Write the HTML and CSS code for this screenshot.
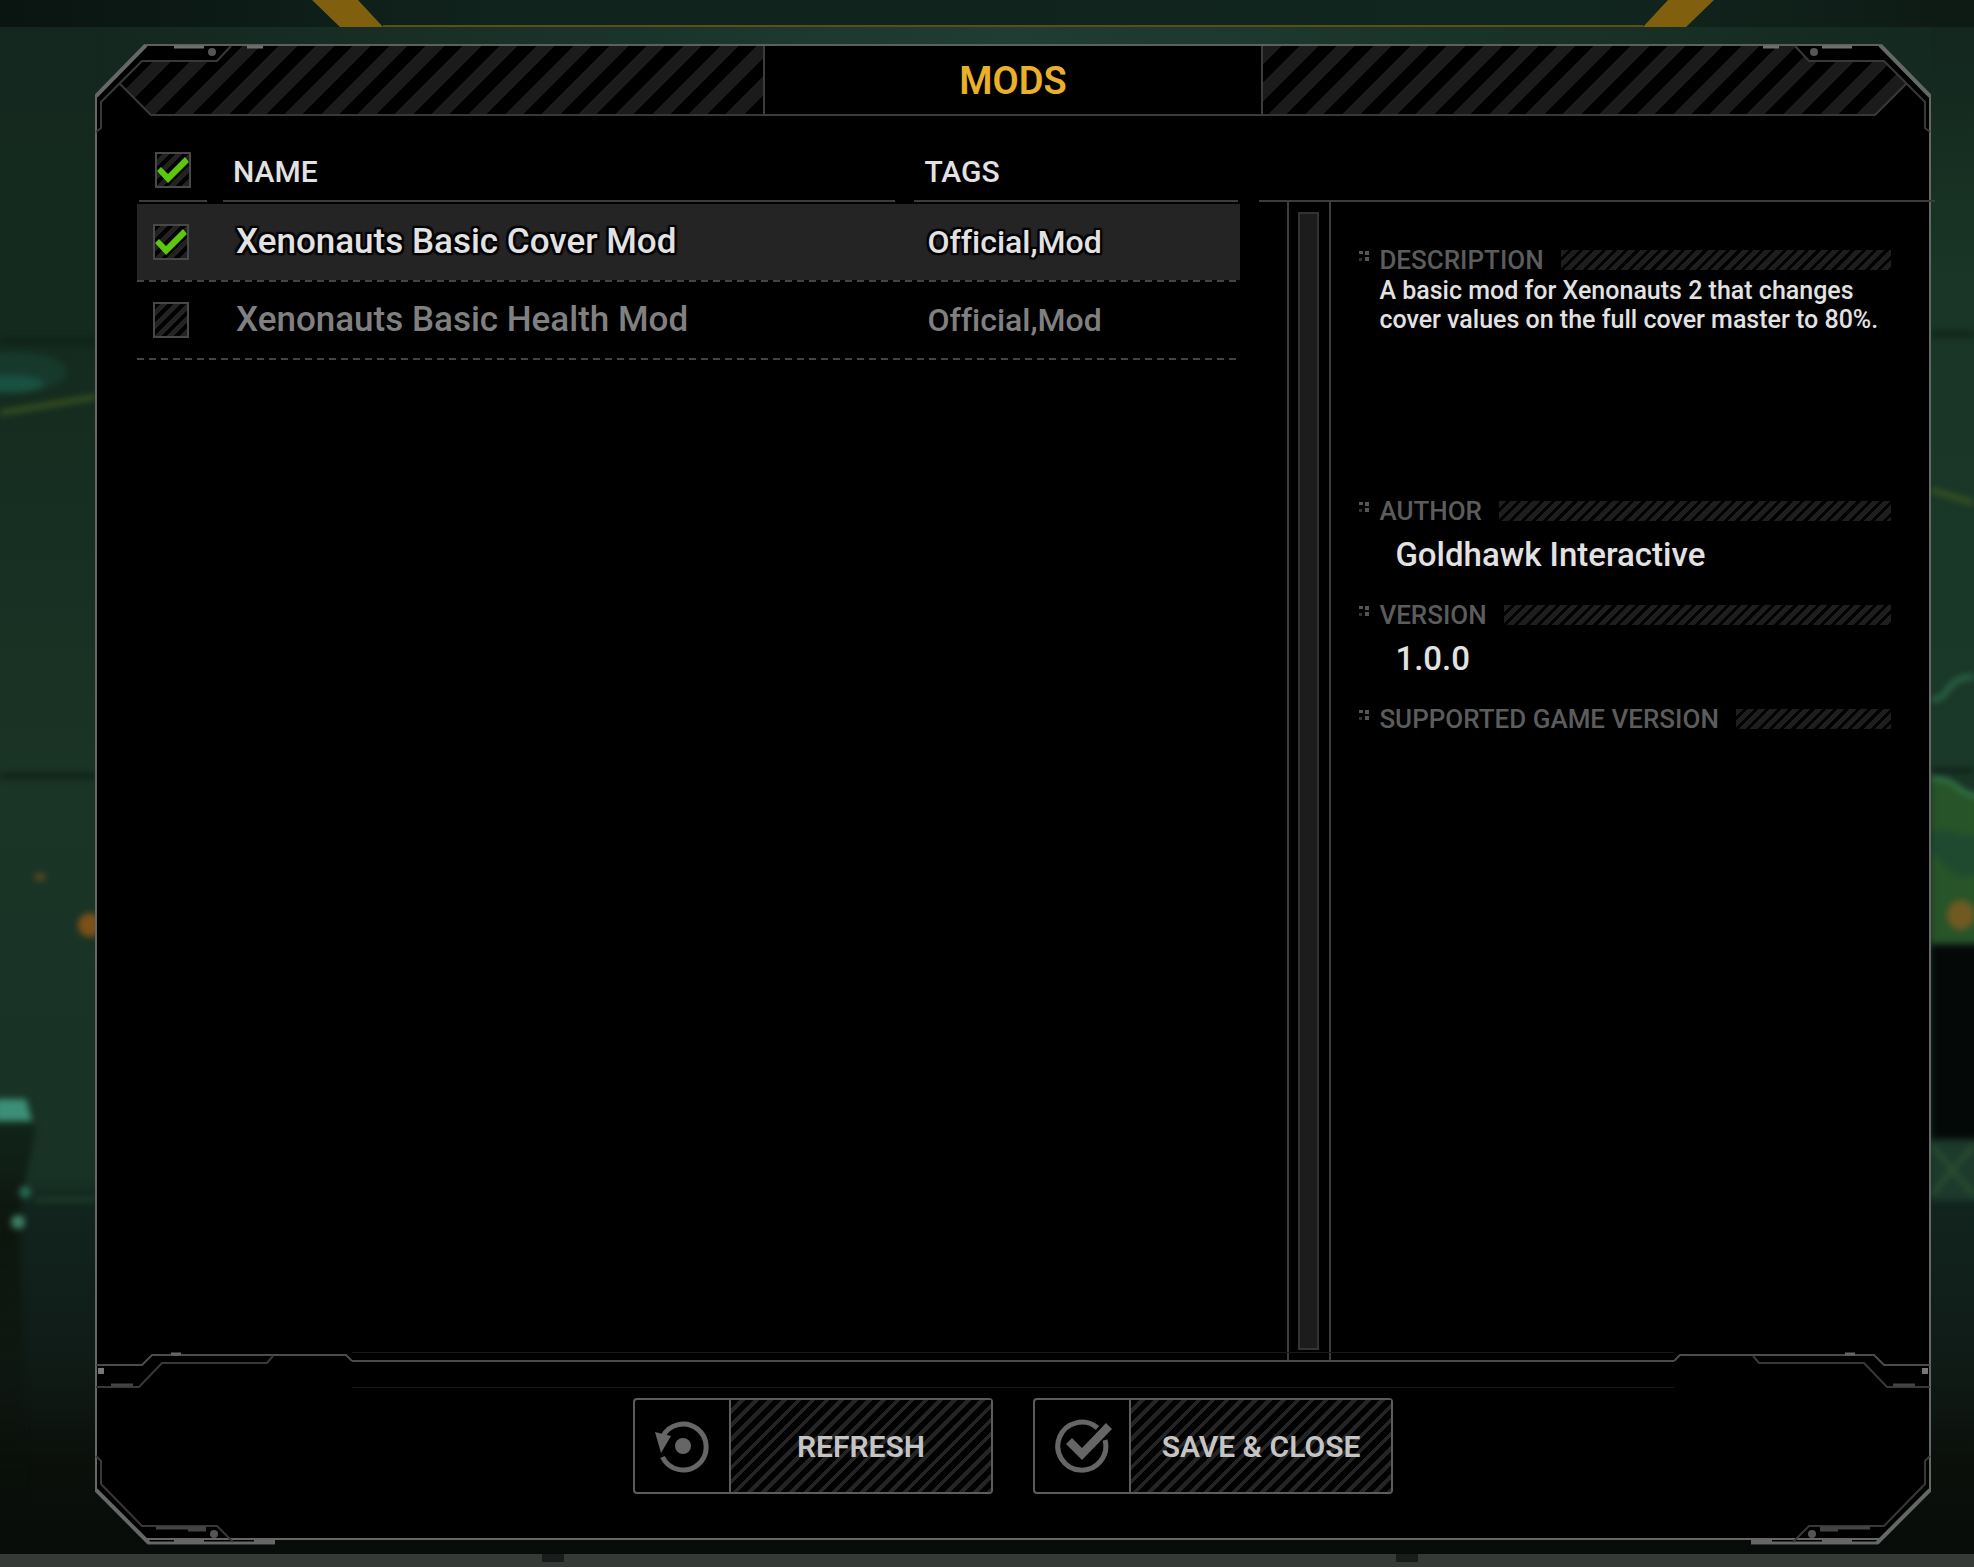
FILE: index.html
```html
<!DOCTYPE html>
<html lang="en">
<head>
<meta charset="utf-8">
<title>Mods</title>
<link rel="stylesheet" href="styles.css">
</head>
<body>
<svg class="scene" viewBox="0 0 1974 1567" preserveAspectRatio="none" aria-hidden="true">
  <defs>
    <linearGradient id="room" x1="0" y1="0" x2="0" y2="1">
      <stop offset="0" stop-color="#14271f"/>
      <stop offset=".2" stop-color="#142a1e"/>
      <stop offset=".5" stop-color="#1a3426"/>
      <stop offset=".75" stop-color="#183326"/>
      <stop offset=".77" stop-color="#12241e"/>
      <stop offset=".88" stop-color="#0f1a15"/>
      <stop offset=".93" stop-color="#0b100b"/>
      <stop offset="1" stop-color="#070b09"/>
    </linearGradient>
    <linearGradient id="glow" x1="0" y1="0" x2="1" y2="0">
      <stop offset="0" stop-color="#14271f"/>
      <stop offset=".5" stop-color="#203d33"/>
      <stop offset="1" stop-color="#14291f"/>
    </linearGradient>
    <linearGradient id="strip" x1="0" y1="0" x2="1" y2="0">
      <stop offset="0" stop-color="#0a1410"/>
      <stop offset=".25" stop-color="#10231c"/>
      <stop offset=".8" stop-color="#11261f"/>
      <stop offset="1" stop-color="#0e1a14"/>
    </linearGradient>
    <linearGradient id="chair" x1="0" y1="0" x2="0" y2="1">
      <stop offset="0" stop-color="#0b140e" stop-opacity=".5"/>
      <stop offset=".3" stop-color="#0d150c" stop-opacity=".9"/>
      <stop offset="1" stop-color="#0a0f0a" stop-opacity="0"/>
    </linearGradient>
    <linearGradient id="wall" x1="0" y1="0" x2="0" y2="1">
      <stop offset="0" stop-color="#1b3b29" stop-opacity="0"/>
      <stop offset=".3" stop-color="#1b3b29" stop-opacity=".7"/>
      <stop offset="1" stop-color="#1b3b29" stop-opacity=".7"/>
    </linearGradient>
    <filter id="soft" x="-20%" y="-20%" width="140%" height="140%" color-interpolation-filters="sRGB"><feGaussianBlur stdDeviation="3"/></filter>
  </defs>
  <rect width="1974" height="1567" fill="url(#room)"/>
  <rect x="96" y="27" width="1835" height="60" fill="url(#glow)"/>
  <rect x="1931" y="60" width="43" height="717" fill="url(#wall)"/>
  <g filter="url(#soft)">
    <path d="M0 341H96M1931 334H1974M0 776H96M1931 771H1974" stroke="#0e1f17" stroke-width="5"/>
    <ellipse cx="15" cy="372" rx="52" ry="20" fill="#18483a" opacity=".5"/>
    <ellipse cx="10" cy="384" rx="34" ry="9" fill="#1a6250" opacity=".6"/>
    <path d="M0 413L96 397" stroke="#3b5420" stroke-width="5" fill="none"/>
    <path d="M1931 490L1974 503" stroke="#3d5422" stroke-width="5" fill="none"/>
    <path d="M1931 699C1950 702 1944 676 1974 677" stroke="#2b6a48" stroke-width="5" fill="none"/>
    <ellipse cx="40" cy="877" rx="6" ry="4" fill="#5a4a1c"/>
    <circle cx="90" cy="925" r="12" fill="#7c5018"/>
    <path d="M1931 778C1960 778 1954 794 1980 796V943H1931Z" fill="#275428"/>
    <path d="M1931 834C1945 822 1960 842 1980 834V872C1960 885 1945 868 1931 850Z" fill="#1f4a30"/>
    <path d="M1931 778C1960 778 1954 794 1980 796" stroke="#348150" stroke-width="4" fill="none"/>
    <ellipse cx="1961" cy="915" rx="14" ry="15" fill="#705a22"/>
    <rect x="1931" y="945" width="50" height="194" fill="#040907"/>
    <rect x="1931" y="1142" width="50" height="58" fill="#1d3a2c"/>
    <path d="M1931 1145L1974 1195M1974 1145L1931 1195" stroke="#2b5230" stroke-width="4"/>
    <path d="M-5 1124H36C32 1160 18 1190 20 1250L26 1500H-5Z" fill="url(#chair)"/>
    <path d="M-5 1099H26L32 1121H-5Z" fill="#3c8f76"/>
    <circle cx="25" cy="1192" r="6" fill="#286b53"/>
    <circle cx="18" cy="1222" r="7" fill="#3f8065"/>
    <path d="M36 1200H96" stroke="#1f4a2e" stroke-width="3"/>
  </g>
  <rect y="1554" width="1974" height="13" fill="#353a37"/>
  <path d="M542 1554h22v8h-22zM1396 1554h22v8h-22z" fill="#181c1a"/>
  <rect width="1974" height="27" fill="url(#strip)"/>
  <path d="M383 26H1643" stroke="#5f4d16" stroke-width="2"/>
  <path d="M312 0H358L383 27H340ZM1668 0H1714L1686 27H1643Z" fill="#80600f"/>
</svg>

<main class="panel">
  <svg class="corner corner-tl" width="180" height="90" aria-hidden="true"><use href="#top-corner"/></svg>
  <svg class="corner corner-tr" width="180" height="90" aria-hidden="true"><use href="#top-corner"/></svg>
  <svg class="corner corner-bl" width="180" height="92" aria-hidden="true"><use href="#bottom-corner"/></svg>
  <svg class="corner corner-br" width="180" height="92" aria-hidden="true"><use href="#bottom-corner"/></svg>

  <header class="titlebar">
    <div class="hazard hazard-left"></div>
    <h1 class="title">MODS</h1>
    <div class="hazard hazard-right"></div>
  </header>

  <div class="content">
    <section class="list">
      <table class="mods">
        <colgroup><col class="col-check"><col class="col-name"><col class="col-tags"></colgroup>
        <thead>
          <tr>
            <th scope="col"><div class="head head-check"><input class="check" type="checkbox" checked aria-label="Enable all mods"></div></th>
            <th scope="col"><div class="head head-name">NAME</div></th>
            <th scope="col"><div class="head head-tags">TAGS</div></th>
          </tr>
        </thead>
        <tbody>
          <tr class="mod selected">
            <td><input class="check" type="checkbox" id="mod-cover" checked></td>
            <td><label for="mod-cover">Xenonauts Basic Cover Mod</label></td>
            <td class="tags">Official,Mod</td>
          </tr>
          <tr class="mod">
            <td><input class="check" type="checkbox" id="mod-health"></td>
            <td><label for="mod-health">Xenonauts Basic Health Mod</label></td>
            <td class="tags">Official,Mod</td>
          </tr>
        </tbody>
      </table>
    </section>

    <div class="side">
      <div class="scroll"><div class="track"></div></div>
      <section class="details">
        <div class="field field-description">
          <h2 class="label"><svg class="pips" width="12" height="12" aria-hidden="true"><use href="#pips"/></svg>DESCRIPTION</h2>
          <p class="text">A basic mod for Xenonauts 2 that changes cover values on the full cover master to 80%.</p>
        </div>
        <div class="field">
          <h2 class="label"><svg class="pips" width="12" height="12" aria-hidden="true"><use href="#pips"/></svg>AUTHOR</h2>
          <p class="value">Goldhawk Interactive</p>
        </div>
        <div class="field">
          <h2 class="label"><svg class="pips" width="12" height="12" aria-hidden="true"><use href="#pips"/></svg>VERSION</h2>
          <p class="value">1.0.0</p>
        </div>
        <div class="field">
          <h2 class="label"><svg class="pips" width="12" height="12" aria-hidden="true"><use href="#pips"/></svg>SUPPORTED GAME VERSION</h2>
        </div>
      </section>
    </div>
  </div>

  <div class="rail" aria-hidden="true">
    <svg class="rail-end" width="256" height="36"><use href="#rail-end"/></svg>
    <div class="rail-line"></div>
    <svg class="rail-end flipped" width="256" height="36"><use href="#rail-end"/></svg>
  </div>

  <footer class="actions">
    <button class="button" type="button">
      <span class="button-icon">
        <svg width="56" height="56" viewBox="0 0 56 56" aria-hidden="true">
          <path d="M8.500 19A23 23 0 1 1 8.500 39" fill="none" stroke="#666" stroke-width="5"/>
          <circle cx="29" cy="28" r="8" fill="#666"/>
          <path d="M1 14L17 18L7 35Z" fill="#666"/>
        </svg>
      </span>
      <span class="button-label">REFRESH</span>
    </button>
    <button class="button" type="button">
      <span class="button-icon">
        <svg width="60" height="56" viewBox="0 0 60 56" aria-hidden="true">
          <path d="M45.500 10A24 24 0 1 0 53 22" fill="none" stroke="#666" stroke-width="5"/>
          <path d="M14 26L20 20L30 30L54 5L60 11L30 42Z" fill="#666"/>
        </svg>
      </span>
      <span class="button-label">SAVE &amp; CLOSE</span>
    </button>
  </footer>
</main>

<svg class="symbols" width="0" height="0" aria-hidden="true">
  <defs>
    <g id="top-corner" fill="none">
      <path d="M51 1L1 52" stroke="#646866" stroke-width="4"/>
      <path d="M136 2L122 17H47L6 58V84L1 88M25 40L56 71" stroke="#383838" stroke-width="2"/>
      <path d="M79 3H109M152 3H168" stroke="#6c706e" stroke-width="3"/>
      <circle cx="117" cy="8" r="4" fill="#555"/>
    </g>
    <g id="bottom-corner" fill="none">
      <path d="M1 37L54 90" stroke="#646866" stroke-width="4"/>
      <path d="M53 90H180" stroke="#666" stroke-width="3"/>
      <path d="M1 3L6 8V31L47 73H122L138 89" stroke="#383838" stroke-width="2"/>
      <path d="M61 75H111M93 77H111" stroke="#444" stroke-width="3"/>
      <path d="M79 88H109M159 88H180" stroke="#666" stroke-width="3"/>
      <circle cx="119" cy="81" r="4" fill="#555"/>
    </g>
    <g id="rail-end" fill="none">
      <path d="M0 13H46L56 3H250L256 9" stroke="#4c4c4c" stroke-width="2"/>
      <path d="M0 35H43L66 11H171L177 4" stroke="#383838" stroke-width="2"/>
      <path d="M15 33H37" stroke="#444" stroke-width="3"/>
      <path d="M75 2H85" stroke="#666" stroke-width="3"/>
      <path d="M2 16H8V22H2Z" fill="#777"/>
    </g>
    <g id="pips" fill="#555">
      <path d="M0 1h4v3h-4zM6 1h4v4h-4zM6 7h4v4h-4z"/>
      <path d="M0 8h3v3h-3z" fill="#333"/>
    </g>
  </defs>
</svg>
</body>
</html>
```

FILE: styles.css
```css
* { box-sizing: border-box; }

body {
  margin: 0;
  min-height: 100vh;
  padding: 44px 43px 22px 95px;
  display: flex;
  background: #0a100d;
  color: #e2e2e2;
  font-family: Roboto, "Liberation Sans", sans-serif;
  font-weight: 500;
  font-variant-ligatures: none;
}

h1, h2, p { margin: 0; }

.scene {
  position: absolute;
  inset: 0;
  width: 100%;
  height: 100%;
  z-index: -2;
}

.symbols { position: absolute; }

/* Panel frame */
.panel {
  position: relative;
  flex: 1;
  min-width: 0;
  display: flex;
  flex-direction: column;
}

.panel::before {
  content: "";
  position: absolute;
  inset: 0;
  z-index: -1;
  background:
    linear-gradient(#5c605e, #5c605e) top / 100% 2px no-repeat,
    linear-gradient(#646866, #646866) left / 2px 100% no-repeat,
    linear-gradient(#646866, #646866) right / 2px 100% no-repeat,
    linear-gradient(#666, #666) 0 calc(100% - 5px) / 100% 2px no-repeat,
    #000;
  clip-path: polygon(51px 0, calc(100% - 51px) 0, 100% 51px, 100% calc(100% - 54px),
    calc(100% - 54px) 100%, calc(100% - 180px) 100%, calc(100% - 180px) calc(100% - 5px),
    180px calc(100% - 5px), 180px 100%, 54px 100%, 0 calc(100% - 54px), 0 51px);
}

.corner { position: absolute; z-index: 1; pointer-events: none; }
.corner-tl { top: 0; left: 0; }
.corner-tr { top: 0; right: 0; transform: scaleX(-1); }
.corner-bl { bottom: 0; left: 0; }
.corner-br { bottom: 0; right: 0; transform: scaleX(-1); }
.flipped { transform: scaleX(-1); }

/* Title bar */
.titlebar {
  display: grid;
  grid-template-columns: 1fr 500px 1fr;
  height: 72px;
  padding-top: 2px;
}

.title {
  display: flex;
  align-items: center;
  justify-content: center;
  padding-top: 2px;
  border: 2px solid #3c3c3c;
  border-top: 0;
  color: #e9b02b;
  font-size: 38px;
  font-weight: 600;
  line-height: 40px;
}

.hazard {
  border-bottom: 2px solid #383838;
  background: repeating-linear-gradient(135deg, #1b1b1b 0 13px, #000 13px 26px);
}

.hazard-left { clip-path: polygon(136px 0, 100% 0, 100% 100%, 56px 100%, 25px 38px, 47px 15px, 122px 15px); }
.hazard-right {
  clip-path: polygon(0 0, calc(100% - 136px) 0, calc(100% - 122px) 15px, calc(100% - 47px) 15px,
    calc(100% - 25px) 38px, calc(100% - 56px) 100%, 0 100%);
}

/* Mod list */
.content {
  flex: 1;
  display: grid;
  grid-template-columns: minmax(0, 1104fr) minmax(0, 672fr);
  column-gap: 19px;
  padding-left: 42px;
}

.mods {
  width: 100%;
  table-layout: fixed;
  border-collapse: collapse;
  text-align: left;
}

.col-check { width: 78px; }
.col-tags { width: 334px; }

th, td { padding: 0; }
th { height: 88px; vertical-align: top; }

.head {
  display: flex;
  align-items: center;
  height: 86px;
  padding: 26px 0 0 10px;
  border-bottom: 2px solid #3c3c3c;
  font-size: 30px;
  font-weight: 500;
}

.head-check { margin: 0 8px 0 2px; padding: 24px 0 0 16px; }
.head-name { margin: 0 11px 0 8px; }
.head-tags { margin: 0 2px 0 8px; }

.mod {
  height: 78px;
  color: #808080;
  font-size: 35px;
  line-height: 40px;
  background: repeating-linear-gradient(90deg, #444 0 7px, transparent 7px 12px) bottom / 100% 2px no-repeat;
}

.mod td { padding: 0 0 2px 21px; }
.mod td:first-child { padding-left: 16px; }
.mod .tags { font-size: 32px; }

.selected {
  color: #e2e2e2;
  background:
    repeating-linear-gradient(90deg, #444 0 7px, #000 7px 12px) bottom / 100% 2px no-repeat,
    #242424;
  text-shadow: 2px 0 1px #000, -2px 0 1px #000, 0 2px 1px #000, 0 -2px 1px #000,
    2px 2px 1px #000, -2px -2px 1px #000, 2px -2px 1px #000, -2px 2px 1px #000;
}

.check {
  appearance: none;
  display: block;
  width: 36px;
  height: 36px;
  margin: 0;
  border: 2px solid #484848;
  background: repeating-linear-gradient(135deg, #000 0 4px, #222 4px 9px);
}

.check:checked::before {
  content: "";
  display: block;
  width: 32px;
  height: 32px;
  background: #5bc80f;
  clip-path: polygon(0 17px, 4px 13px, 11px 20px, 28px 3px, 32px 8px, 11px 29px);
}

/* Right side */
.side {
  display: flex;
  margin: 84px -4px 0 0;
  padding-left: 28px;
  border-top: 2px solid #3c3c3c;
}

.scroll {
  width: 44px;
  padding: 10px 10px 11px 9px;
  border: solid #3c3c3c;
  border-width: 0 2px;
  display: flex;
}

.track {
  flex: 1;
  background: #1c1c1c;
  border: 2px solid #333;
}

.details {
  flex: 1;
  min-width: 0;
  padding: 44px 44px 0 28px;
}

.field { min-height: 104px; padding-left: 20px; }
.field-description { min-height: 251px; }

.label {
  position: relative;
  display: flex;
  align-items: center;
  gap: 17px;
  height: 28px;
  color: #5c5c5c;
  font-size: 26px;
  font-weight: 500;
  white-space: nowrap;
}

.label::after {
  content: "";
  flex: 1;
  height: 20px;
  background: repeating-linear-gradient(135deg, #1e1e1e 0 5px, #000 5px 8px);
}

.pips { position: absolute; left: -20px; top: 4px; }

.text { padding-top: 2px; font-size: 25px; line-height: 29px; }
.value { padding: 12px 0 0 16px; font-size: 33px; line-height: 36px; }

/* Divider and buttons */
.rail { display: flex; height: 36px; margin-top: -9px; padding: 0 1px; }
.rail-end { flex: none; }
.rail-line {
  flex: 1;
  border: solid #181818;
  border-width: 1px 0;
  background: linear-gradient(#4c4c4c, #4c4c4c) 0 7px / 100% 2px no-repeat;
}

.actions {
  display: flex;
  justify-content: center;
  gap: 40px;
  padding: 10px 0 51px;
}

.button {
  display: flex;
  width: 360px;
  height: 96px;
  padding: 0;
  border: 2px solid #5c5c5c;
  border-radius: 4px;
  background: #000;
  color: #c4c4c4;
  font: inherit;
  font-size: 30px;
  font-weight: 600;
}

.button-icon {
  width: 96px;
  height: 100%;
  display: flex;
  align-items: center;
  justify-content: center;
  border-right: 2px solid #5c5c5c;
}

.button-label {
  flex: 1;
  height: 100%;
  display: flex;
  align-items: center;
  justify-content: center;
  background: repeating-linear-gradient(135deg, #000 0 6px, #242424 6px 10px);
}
```
